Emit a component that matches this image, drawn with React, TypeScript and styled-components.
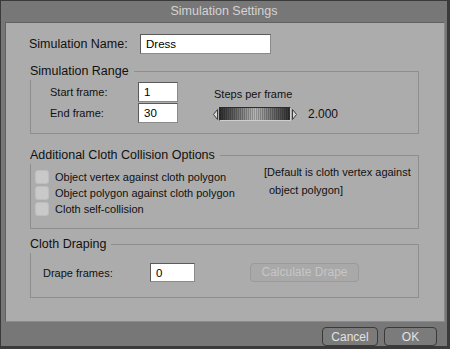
import React from "react";
import styled, { createGlobalStyle } from "styled-components";

const GlobalStyle = createGlobalStyle`
    html, body {
        margin: 0;
        padding: 0;
        background: #3a3a3a;
    }
    * {
        box-sizing: border-box;
    }
`;

const FONT = `"Liberation Sans", Arial, sans-serif`;

const Window = styled.div`
    width: 450px;
    height: 349px;
    display: flex;
    flex-direction: column;
    background: #777777;
    border-style: solid;
    border-color: #3a3a3a;
    border-width: 1px 3px 3px 1px;
    font-family: ${FONT};
    color: #111;
`;

const TitleBar = styled.div`
    height: 21px;
    line-height: 21px;
    text-align: center;
    font-size: 12.5px;
    color: #d4d4d4;
`;

const Panel = styled.div`
    height: 300px;
    margin: 0 2px 0 4px;
    background: #acacac;
    border: 1px solid #626262;
    border-right-color: #8a8a8a;
    border-bottom-color: #8a8a8a;
    padding: 11px 0 0 24px;
`;

const NameRow = styled.div`
    display: grid;
    grid-template-columns: 111px 131px;
    align-items: center;
    margin-left: -1px;
    font-size: 12.5px;
`;

const TextBox = styled.div<{ $w: number; $h?: number }>`
    width: ${(p) => p.$w}px;
    height: ${(p) => p.$h ?? 20}px;
    background: #ffffff;
    border: 1px solid #5a5a5a;
    border-right-color: #8a8a8a;
    border-bottom-color: #8a8a8a;
    padding-left: 5px;
    font-size: 11.5px;
    display: flex;
    align-items: center;
    color: #000;
`;

const Group = styled.div<{ $top: number; $h: number }>`
    position: relative;
    width: 389px;
    height: ${(p) => p.$h}px;
    margin-top: ${(p) => p.$top}px;
    border: 1px solid #8e8e8e;
`;

const Legend = styled.div`
    position: absolute;
    top: -10px;
    left: -1px;
    height: 18px;
    line-height: 18px;
    padding-right: 5px;
    background: #acacac;
    font-size: 12.5px;
`;

const RangeBody = styled.div`
    display: flex;
    padding: 10px 0 0 19px;
`;

const FrameGrid = styled.div`
    display: grid;
    grid-template-columns: 88px 40px;
    grid-auto-rows: 20px;
    row-gap: 1px;
    align-items: center;
    font-size: 11px;
`;

const StepsCol = styled.div`
    margin-left: 35px;
    padding-top: 5px;
    font-size: 11px;
`;

const StepsLabel = styled.div`
    line-height: 14px;
    margin-left: 1px;
`;

const SliderRow = styled.div`
    display: flex;
    align-items: center;
    height: 14px;
    margin-top: 6px;
`;

const SliderBar = styled.div`
    width: 72px;
    height: 14px;
    margin: 0 1px;
    border: 1px solid #2c2c2c;
    border-right-color: #cfcfcf;
    border-bottom-color: #cfcfcf;
    background:
        repeating-linear-gradient(to right, rgba(0, 0, 0, 0.2) 0 1px, transparent 1px 2px),
        linear-gradient(to right, #2e2e2e, #666 22%, #b8b8b8 50%, #666 78%, #2e2e2e);
`;

const SliderValue = styled.span`
    margin-left: 11px;
    font-size: 12px;
`;

const OptionsBody = styled.div`
    display: grid;
    grid-template-columns: 229px auto;
    padding: 13px 0 0 4px;
`;

const CheckList = styled.div`
    display: flex;
    flex-direction: column;
`;

const CheckRow = styled.label`
    display: flex;
    align-items: center;
    gap: 6px;
    height: 16px;
    font-size: 11px;
`;

const CheckBox = styled.span`
    width: 14px;
    height: 14px;
    border-radius: 3px;
    background: #c9c9c9;
    border: 1px solid #bdbdbd;
`;

const Note = styled.div`
    margin-top: -6px;
    font-size: 11px;
    line-height: 18px;
`;

const NoteLine = styled.div<{ $indent?: number }>`
    padding-left: ${(p) => p.$indent ?? 0}px;
`;

const DrapeBody = styled.div`
    display: flex;
    align-items: center;
    padding: 18px 0 0 12px;
    font-size: 11px;
`;

const DrapeLabel = styled.span`
    width: 107px;
`;

const Button = styled.button<{ $w: number; $disabled?: boolean }>`
    width: ${(p) => p.$w}px;
    height: 19px;
    padding: 0;
    border-radius: 4px;
    font-family: ${FONT};
    font-size: 12px;
    border: 1px solid ${(p) => (p.$disabled ? "#9a9a9a" : "#3a3a3a")};
    background: ${(p) => (p.$disabled ? "#a9a9a9" : "#7b7b7b")};
    color: ${(p) => (p.$disabled ? "#c6c6c6" : "#e2e2e2")};
`;

const DrapeButton = styled(Button)`
    margin-left: 55px;
    margin-top: -1px;
`;

const Footer = styled.div`
    display: flex;
    justify-content: flex-end;
    gap: 6px;
    padding: 5px 10px 0 0;
`;

const Arrow = ({ dir }: { dir: "left" | "right" }) => (
    <svg width="5" height="11" viewBox="0 0 5 11">
        <polygon
            points={dir === "left" ? "4.5,0.5 0.5,5.5 4.5,10.5" : "0.5,0.5 4.5,5.5 0.5,10.5"}
            fill="#d8d8d8"
            stroke="#3c3c3c"
            strokeWidth="1"
        />
    </svg>
);

const options = [
    "Object vertex against cloth polygon",
    "Object polygon against cloth polygon",
    "Cloth self-collision"
];

const App = () => {
    return (
        <>
            <GlobalStyle />
            <Window>
                <TitleBar>Simulation Settings</TitleBar>
                <Panel>
                    <NameRow>
                        <span>Simulation Name:</span>
                        <TextBox $w={131}>Dress</TextBox>
                    </NameRow>

                    <Group $top={17} $h={63}>
                        <Legend>Simulation Range</Legend>
                        <RangeBody>
                            <FrameGrid>
                                <span>Start frame:</span>
                                <TextBox $w={40}>1</TextBox>
                                <span>End frame:</span>
                                <TextBox $w={40}>30</TextBox>
                            </FrameGrid>
                            <StepsCol>
                                <StepsLabel>Steps per frame</StepsLabel>
                                <SliderRow>
                                    <Arrow dir="left" />
                                    <SliderBar />
                                    <Arrow dir="right" />
                                    <SliderValue>2.000</SliderValue>
                                </SliderRow>
                            </StepsCol>
                        </RangeBody>
                    </Group>

                    <Group $top={21} $h={74}>
                        <Legend>Additional Cloth Collision Options</Legend>
                        <OptionsBody>
                            <CheckList>
                                {options.map((o) => (
                                    <CheckRow key={o}>
                                        <CheckBox />
                                        {o}
                                    </CheckRow>
                                ))}
                            </CheckList>
                            <Note>
                                <NoteLine>[Default is cloth vertex against</NoteLine>
                                <NoteLine $indent={5}>object polygon]</NoteLine>
                            </Note>
                        </OptionsBody>
                    </Group>

                    <Group $top={15} $h={54}>
                        <Legend>Cloth Draping</Legend>
                        <DrapeBody>
                            <DrapeLabel>Drape frames:</DrapeLabel>
                            <TextBox $w={45} $h={19}>0</TextBox>
                            <DrapeButton $w={109} $disabled>
                                Calculate Drape
                            </DrapeButton>
                        </DrapeBody>
                    </Group>
                </Panel>
                <Footer>
                    <Button $w={56}>Cancel</Button>
                    <Button $w={53}>OK</Button>
                </Footer>
            </Window>
        </>
    );
};

export default App;
